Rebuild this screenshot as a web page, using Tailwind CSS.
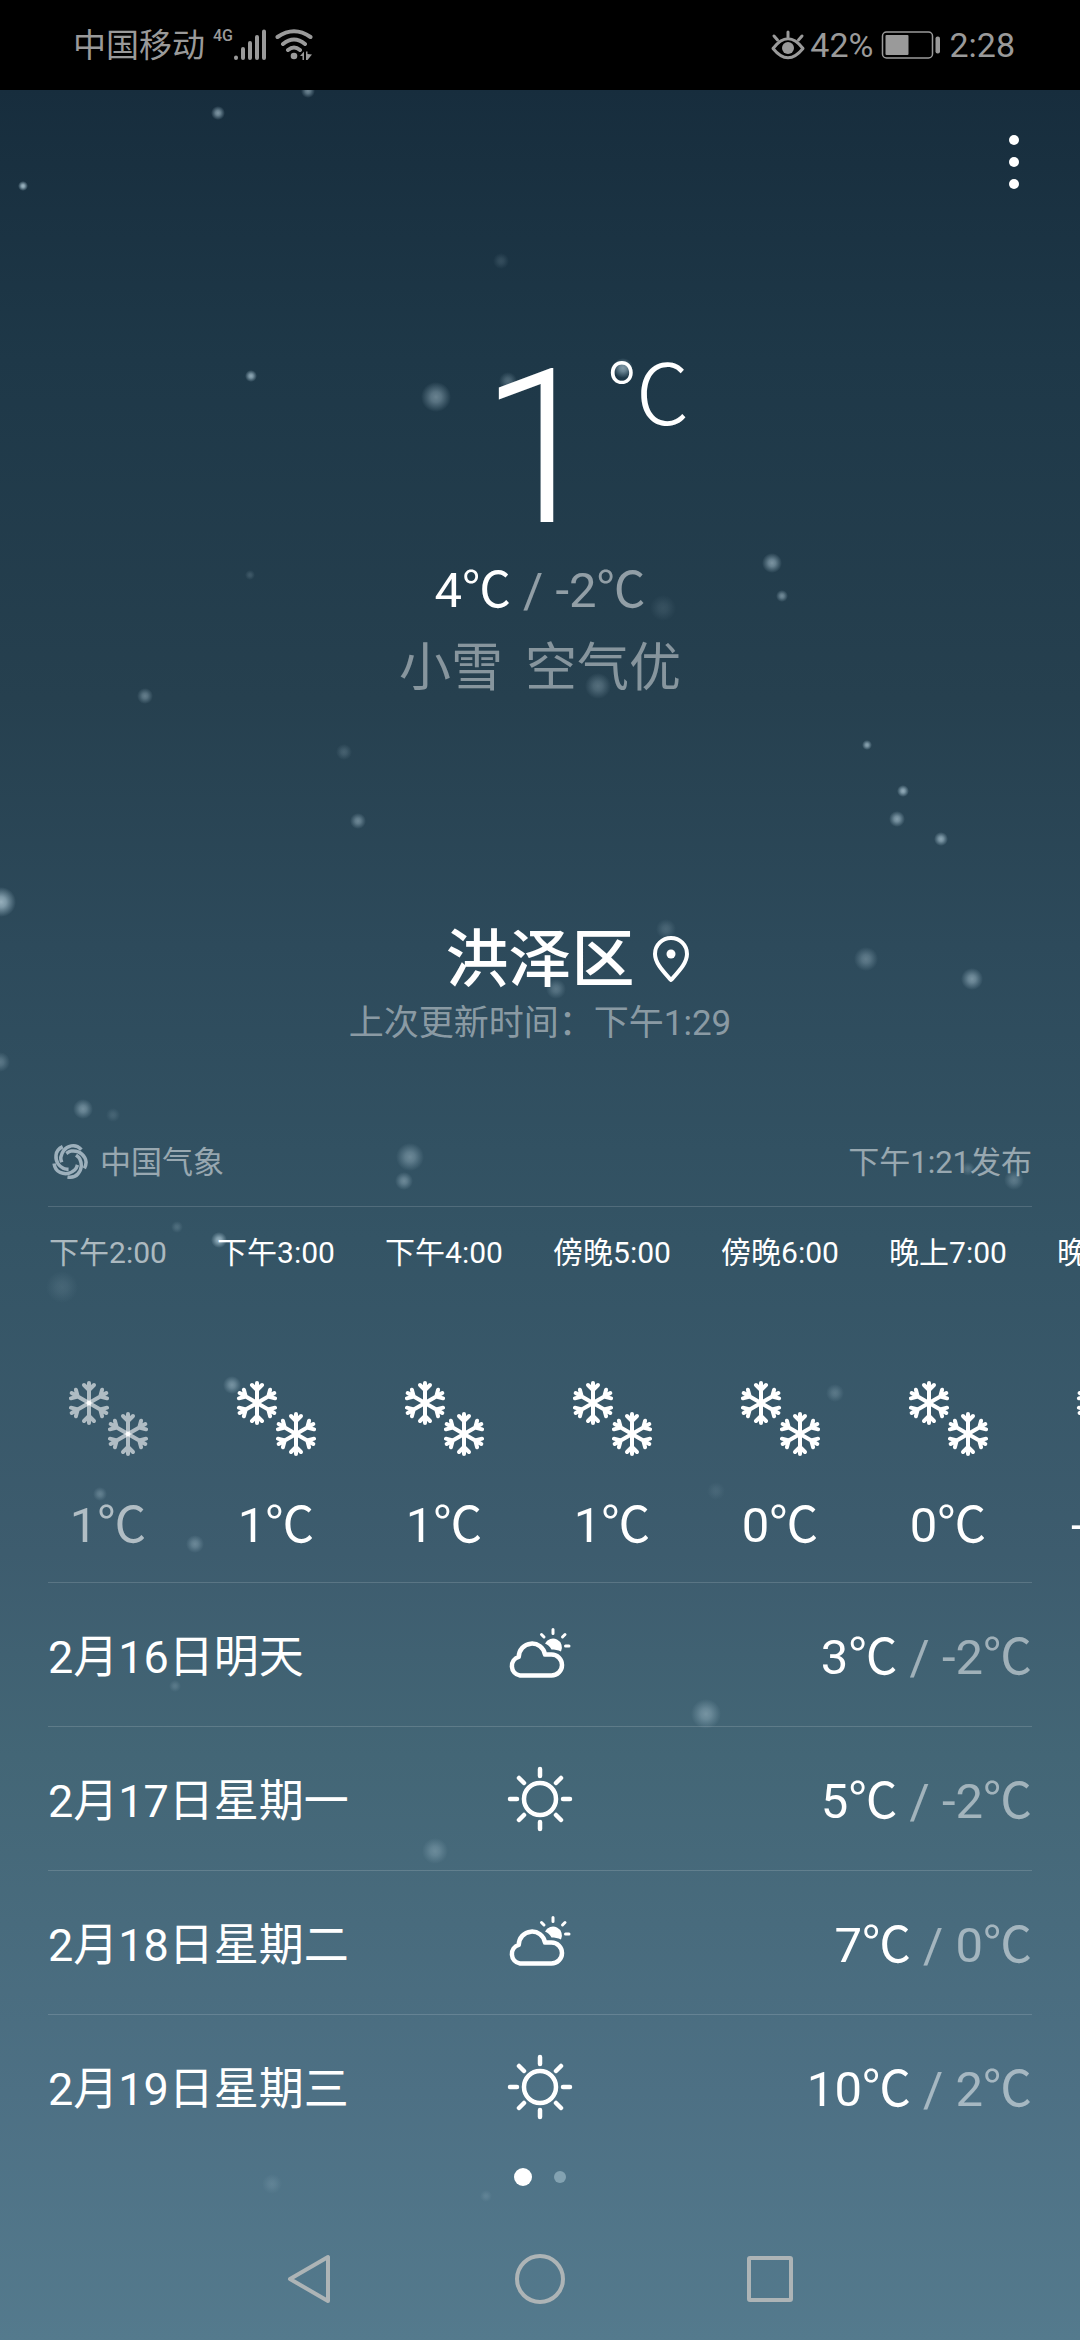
<!DOCTYPE html>
<html lang="zh-CN">
<head>
<meta charset="utf-8">
<meta name="viewport" content="width=device-width, initial-scale=1">
<title>天气</title>
<script src="https://cdn.jsdelivr.net/npm/@tailwindcss/browser@4"></script>
</head>
<body class="bg-black font-['Roboto','Noto_Sans_CJK_SC',sans-serif] text-white">
<svg class="absolute size-0" aria-hidden="true">
  <defs>
    <g id="arm"><path d="M0 0V-20M-5 -18L0 -13L5 -18"/></g>
    <g id="flake">
      <use href="#arm"/><use href="#arm" transform="rotate(60)"/><use href="#arm" transform="rotate(120)"/>
      <use href="#arm" transform="rotate(180)"/><use href="#arm" transform="rotate(240)"/><use href="#arm" transform="rotate(300)"/>
    </g>
    <symbol id="snow" viewBox="0 0 96 96">
      <g fill="none" stroke="currentColor" stroke-width="4" stroke-linecap="round" stroke-linejoin="round">
        <use href="#flake" x="29" y="33"/><use href="#flake" x="68" y="64"/>
      </g>
    </symbol>
    <symbol id="cloudy" viewBox="0 0 64 64">
      <g fill="none" stroke="currentColor" stroke-width="4.500" stroke-linejoin="round">
        <path d="M12 52.5H43.5A10.5 10.5 0 0 0 43.5 31.5H37A13.2 13.2 0 0 0 10.8 33.8A9.6 9.6 0 0 0 12 52.5Z"/>
        <path stroke-width="3" stroke-linecap="round" d="M45 6.500V10.500M33.500 11.500L36 14M57 11.500L54.500 14M57.500 23H61"/>
      </g>
      <path fill="currentColor" d="M37 20.500A8.600 8.600 0 1 1 53 28.500C50 27 46.500 26.500 43.500 26.500C42 23.500 39.500 21.700 37 20.500Z"/>
    </symbol>
    <symbol id="sunny" viewBox="0 0 68 68">
      <g fill="none" stroke="currentColor" stroke-width="4.500" stroke-linecap="round">
        <circle cx="34" cy="34" r="16"/>
        <path d="M34 4V11M34 57V64M4 34H11M57 34H64M13 13L18 18M50 50L55 55M13 55L18 50M50 18L55 13"/>
      </g>
    </symbol>
    <radialGradient id="glow">
      <stop offset="0" stop-color="#c4dbe6"/><stop offset=".35" stop-color="#b4cedb" stop-opacity=".85"/><stop offset="1" stop-color="#a6c4d2" stop-opacity="0"/>
    </radialGradient>
  </defs>
</svg>

<div class="flex min-h-screen flex-col">
  <header class="flex h-[90px] shrink-0 items-center justify-between pr-[65px] pl-[73px] text-[34px] leading-[48px] text-[#9a9a9a]">
    <div class="flex items-center">
      <span class="pt-0.5 text-[33px]">中国移动</span>
      <span class="ml-2 self-start pt-0.5 text-base leading-7 font-medium">4G</span>
      <svg class="h-8 w-[34px]" viewBox="0 0 34 32" fill="none" stroke="currentColor" stroke-width="4" stroke-linecap="round" aria-label="信号"><path d="M3 28.500V29M10 20V29M17 14V29M24 8V29M31 2.500V29"/></svg>
      <svg class="ml-2 h-8 w-10" viewBox="0 0 40 32" fill="none" stroke="currentColor" stroke-width="4" stroke-linecap="round" aria-label="无线网络">
        <path d="M2.500 8Q19 -3.500 35.500 8M8 15Q19 6 30 15M13 21Q19 16 25 21"/>
        <circle cx="19" cy="27" r="3.300" fill="currentColor" stroke="none"/>
        <path fill="currentColor" stroke="none" d="M25 27L29 22.500V31H27.500V27ZM31 22.500H32.500V25L37 25.500L32.500 31H31Z"/>
      </svg>
    </div>
    <div class="flex items-center">
      <svg class="mr-1 h-8 w-9" viewBox="0 0 36 32" fill="none" stroke="currentColor" stroke-width="3" stroke-linecap="round" aria-label="护眼模式">
        <path d="M3 19.500Q18 0 33 19.500Q18 38 3 19.500Z" stroke-linejoin="round"/><circle cx="18" cy="19" r="6" fill="currentColor" stroke="none"/><path d="M18 3V8M4 7L7.500 11M32 7L28.500 11"/>
      </svg>
      <span>42%</span>
      <svg class="mr-2 ml-2 h-8 w-[60px]" viewBox="0 0 60 32" aria-label="电量"><rect x="1.500" y="3" width="50" height="26" rx="4" fill="none" stroke="currentColor" stroke-width="1.500"/><rect x="4.500" y="6" width="23" height="20" rx="1" fill="currentColor"/><rect x="54.500" y="7.500" width="4.500" height="17" rx="2" fill="currentColor"/></svg>
      <time>2:28</time>
    </div>
  </header>

  <main class="relative flex grow flex-col overflow-hidden bg-[linear-gradient(to_bottom,#172d3d_0%,#1e3848_12%,#26404f_27%,#2d4a5b_38%,#345465_51%,#3d5c6e_65%,#436676_74%,#4d7084_89%,#547a8d_100%)]">
    <svg class="pointer-events-none absolute inset-0 size-full" viewBox="0 90 1080 2250" preserveAspectRatio="xMidYMin slice" fill="url(#glow)" aria-hidden="true">
      <circle cx="218" cy="113" r="7" opacity=".6"/><circle cx="308" cy="91" r="7" opacity=".5"/><circle cx="23" cy="186" r="5" opacity=".8"/><circle cx="501" cy="261" r="8" opacity=".15"/>
      <circle cx="251" cy="376" r="6" opacity=".7"/><circle cx="436" cy="397" r="15" opacity=".45"/><circle cx="508" cy="381" r="9" opacity=".3"/><circle cx="623" cy="368" r="10" opacity=".6"/>
      <circle cx="772" cy="563" r="10" opacity=".55"/><circle cx="782" cy="596" r="6" opacity=".5"/><circle cx="663" cy="608" r="13" opacity=".12"/><circle cx="250" cy="575" r="5" opacity=".18"/>
      <circle cx="145" cy="696" r="8" opacity=".4"/><circle cx="598" cy="686" r="13" opacity=".3"/><circle cx="344" cy="752" r="8" opacity=".2"/><circle cx="358" cy="821" r="8" opacity=".45"/>
      <circle cx="867" cy="745" r="5" opacity=".65"/><circle cx="903" cy="791" r="6" opacity=".7"/><circle cx="897" cy="819" r="8" opacity=".6"/><circle cx="941" cy="839" r="7" opacity=".65"/>
      <circle cx="1" cy="902" r="15" opacity=".7"/><circle cx="666" cy="929" r="10" opacity=".2"/><circle cx="866" cy="959" r="12" opacity=".35"/><circle cx="972" cy="979" r="11" opacity=".5"/>
      <circle cx="556" cy="989" r="10" opacity=".3"/><circle cx="0" cy="1062" r="10" opacity=".3"/><circle cx="83" cy="1109" r="10" opacity=".45"/><circle cx="113" cy="1115" r="7" opacity=".15"/>
      <circle cx="410" cy="1157" r="14" opacity=".4"/><circle cx="404" cy="1181" r="9" opacity=".4"/><circle cx="177" cy="1227" r="6" opacity=".2"/><circle cx="219" cy="1240" r="8" opacity=".7"/>
      <circle cx="62" cy="1287" r="16" opacity=".12"/><circle cx="1014" cy="1180" r="10" opacity=".3"/><circle cx="968" cy="1169" r="7" opacity=".25"/><circle cx="232" cy="1385" r="9" opacity=".45"/>
      <circle cx="835" cy="1393" r="9" opacity=".25"/><circle cx="100" cy="1494" r="7" opacity=".3"/><circle cx="195" cy="1544" r="9" opacity=".35"/><circle cx="716" cy="1491" r="9" opacity=".1"/>
      <circle cx="706" cy="1714" r="15" opacity=".4"/><circle cx="435" cy="1851" r="13" opacity=".3"/><circle cx="175" cy="1686" r="6" opacity=".2"/><circle cx="272" cy="2184" r="10" opacity=".15"/><circle cx="486" cy="2196" r="6" opacity=".15"/>
    </svg>

    <div class="relative flex h-36 items-center justify-end pr-[34px]">
      <button type="button" aria-label="更多选项" class="flex h-24 w-16 flex-col items-center justify-center gap-3">
        <span class="size-2.5 rounded-full bg-white"></span><span class="size-2.5 rounded-full bg-white"></span><span class="size-2.5 rounded-full bg-white"></span>
      </button>
    </div>

    <section class="relative mt-[107px] flex flex-col">
      <div class="grid grid-cols-[1fr_auto_1fr] font-light">
        <span class="col-start-2 text-[216px] leading-[216px]">1</span>
        <span class="ml-1.5 text-[84px] leading-[112px]">℃</span>
      </div>
      <p class="mt-0.5 text-center text-[49px] leading-16">4℃<span class="text-white/50"> / -2℃</span></p>
      <p class="mt-2.5 flex justify-center gap-[22px] text-[52px] leading-[72px] text-white/45"><span>小雪</span><span>空气优</span></p>
    </section>

    <section class="relative mt-[219px]">
      <div class="grid grid-cols-[1fr_auto_1fr] items-center">
        <h1 class="col-start-2 text-[63px] leading-[72px] font-medium">洪泽区</h1>
        <svg class="ml-4 h-12 w-10" viewBox="0 0 40 48" fill="none" stroke="currentColor" stroke-width="4" stroke-linejoin="round" aria-label="当前位置"><path d="M20 44C12 35 4 27 4 18A16 16 0 0 1 36 18C36 27 28 35 20 44Z"/><circle cx="20" cy="18" r="4.500" fill="currentColor" stroke="none"/></svg>
      </div>
      <p class="mt-1 text-center text-[35px] leading-[48px] text-white/45">上次更新时间：下午1:29</p>
    </section>

    <div class="relative mx-12 mt-[68px] flex h-[91px] items-center justify-between border-b border-white/15 text-[31px] leading-[48px] text-white/50">
      <a href="#" class="flex items-center gap-3">
        <svg class="ml-1 size-9" viewBox="-18 -18 36 36" fill="none" stroke="#9db0bc" stroke-width="3.500" aria-hidden="true">
          <defs><path id="blade" d="M11.400 -11.400C7.500 -15.500 4 -15.700 1.300 -15.100S-4.200 -13.200 -6.200 -10.700S-8.600 -6.500 -9.100 -4.200S-9 -1 -8.300 1.200"/></defs>
          <use href="#blade"/><use href="#blade" transform="rotate(72)"/><use href="#blade" transform="rotate(144)"/><use href="#blade" transform="rotate(216)"/><use href="#blade" transform="rotate(288)"/>
        </svg>
        <span class="pt-1">中国气象</span>
      </a>
      <span class="pt-1">下午1:21发布</span>
    </div>

    <ul class="relative flex overflow-hidden pt-[22px] pb-6 pl-6">
      <li class="flex w-[168px] shrink-0 flex-col items-center text-white/60"><span class="text-[30px] leading-[48px] whitespace-nowrap">下午2:00</span><svg class="mt-[93px] size-24"><use href="#snow"/></svg><span class="mt-7 text-[49px] leading-16">1℃</span></li>
      <li class="flex w-[168px] shrink-0 flex-col items-center"><span class="text-[30px] leading-[48px] whitespace-nowrap">下午3:00</span><svg class="mt-[93px] size-24"><use href="#snow"/></svg><span class="mt-7 text-[49px] leading-16">1℃</span></li>
      <li class="flex w-[168px] shrink-0 flex-col items-center"><span class="text-[30px] leading-[48px] whitespace-nowrap">下午4:00</span><svg class="mt-[93px] size-24"><use href="#snow"/></svg><span class="mt-7 text-[49px] leading-16">1℃</span></li>
      <li class="flex w-[168px] shrink-0 flex-col items-center"><span class="text-[30px] leading-[48px] whitespace-nowrap">傍晚5:00</span><svg class="mt-[93px] size-24"><use href="#snow"/></svg><span class="mt-7 text-[49px] leading-16">1℃</span></li>
      <li class="flex w-[168px] shrink-0 flex-col items-center"><span class="text-[30px] leading-[48px] whitespace-nowrap">傍晚6:00</span><svg class="mt-[93px] size-24"><use href="#snow"/></svg><span class="mt-7 text-[49px] leading-16">0℃</span></li>
      <li class="flex w-[168px] shrink-0 flex-col items-center"><span class="text-[30px] leading-[48px] whitespace-nowrap">晚上7:00</span><svg class="mt-[93px] size-24"><use href="#snow"/></svg><span class="mt-7 text-[49px] leading-16">0℃</span></li>
      <li class="flex w-[168px] shrink-0 flex-col items-center"><span class="text-[30px] leading-[48px] whitespace-nowrap">晚上8:00</span><svg class="mt-[93px] size-24"><use href="#snow"/></svg><span class="mt-7 text-[49px] leading-16">-1℃</span></li>
    </ul>

    <ul class="relative mx-12 text-[49px] leading-16">
      <li class="grid h-36 grid-cols-[1fr_auto_1fr] items-center border-t border-white/15"><span class="pt-1.5 text-[45px]">2月16日明天</span><svg class="size-16"><use href="#cloudy"/></svg><span class="pt-1.5 text-right">3℃<span class="text-white/50"> / -2℃</span></span></li>
      <li class="grid h-36 grid-cols-[1fr_auto_1fr] items-center border-t border-white/15"><span class="pt-1.5 text-[45px]">2月17日星期一</span><svg class="size-[68px]"><use href="#sunny"/></svg><span class="pt-1.5 text-right">5℃<span class="text-white/50"> / -2℃</span></span></li>
      <li class="grid h-36 grid-cols-[1fr_auto_1fr] items-center border-t border-white/15"><span class="pt-1.5 text-[45px]">2月18日星期二</span><svg class="size-16"><use href="#cloudy"/></svg><span class="pt-1.5 text-right">7℃<span class="text-white/50"> / 0℃</span></span></li>
      <li class="grid h-36 grid-cols-[1fr_auto_1fr] items-center border-t border-white/15"><span class="pt-1.5 text-[45px]">2月19日星期三</span><svg class="size-[68px]"><use href="#sunny"/></svg><span class="pt-1.5 text-right">10℃<span class="text-white/50"> / 2℃</span></span></li>
    </ul>

    <div class="relative mt-2.5 flex items-center justify-center gap-[22px]">
      <span class="size-[18px] rounded-full bg-white"></span><span class="size-3 rounded-full bg-[#83a2b1]"></span>
    </div>

    <nav class="relative mt-auto flex h-[122px] items-center justify-center text-[#adb4b6]" aria-label="系统导航">
      <button type="button" aria-label="返回" class="flex h-24 w-[230px] items-center justify-center"><svg class="size-14" viewBox="0 0 56 56" fill="none" stroke="currentColor" stroke-width="4" stroke-linejoin="round"><path d="M46 6V50L8 28Z"/></svg></button>
      <button type="button" aria-label="主屏幕" class="flex h-24 w-[230px] items-center justify-center"><svg class="size-14" viewBox="0 0 56 56" fill="none" stroke="currentColor" stroke-width="4"><circle cx="28" cy="28" r="23"/></svg></button>
      <button type="button" aria-label="最近任务" class="flex h-24 w-[230px] items-center justify-center"><svg class="size-14" viewBox="0 0 56 56" fill="none" stroke="currentColor" stroke-width="4"><rect x="7" y="7" width="42" height="42" rx="1"/></svg></button>
    </nav>
  </main>
</div>
</body>
</html>
